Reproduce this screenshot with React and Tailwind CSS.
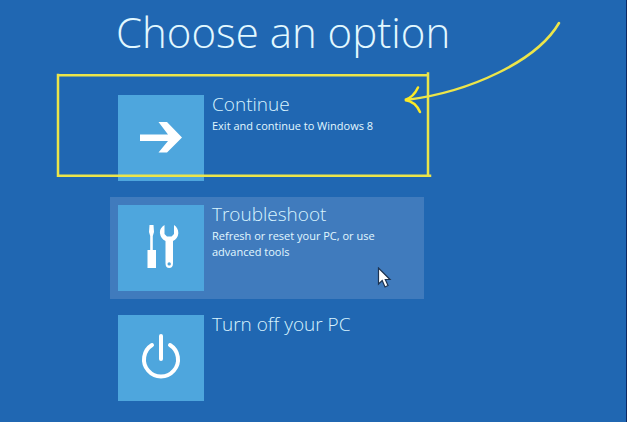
const ArrowIcon = () => (
  <svg viewBox="0 0 86 86" className="size-full" fill="#fff" aria-hidden="true">
    <path d="M22 39.5H50L40.500 27H49L64 42.500L49 57.500H40.500L50 46H22Z" />
  </svg>
)

const ToolsIcon = () => (
  <svg viewBox="0 0 86 86" className="size-full" fill="#fff" aria-hidden="true">
    <path d="M31.500 20H35.500L36 27L34.800 31V45H38V63H29.500V45H32.200V31L31 27Z" />
    <path
      fillRule="evenodd"
      d="M46.500 20C43 22 41.500 25 42 28.500C42.500 32 44.500 34.500 47.500 36V58.500C47.500 61.500 49 63 51.200 63C53.500 63 55 61.500 55 58.500V36C58 34.500 60 32 60.300 28.500C60.500 25 59 22 56 20V29L53.500 31.500H49L46.500 29ZM51.200 57.200A1.700 1.700 0 1 1 51.200 60.600A1.700 1.700 0 1 1 51.200 57.200Z"
    />
  </svg>
)

const PowerIcon = () => (
  <svg viewBox="0 0 86 86" className="size-full" fill="none" stroke="#fff" strokeWidth="4" strokeLinecap="round" aria-hidden="true">
    <path d="M43 21V44" />
    <path d="M34 30A17 17 0 1 0 52 30" />
  </svg>
)

const options = [
  { id: 'continue', title: 'Continue', description: 'Exit and continue to Windows 8', icon: ArrowIcon },
  { id: 'troubleshoot', title: 'Troubleshoot', description: 'Refresh or reset your PC, or use advanced tools', icon: ToolsIcon, active: true },
  { id: 'power', title: 'Turn off your PC', icon: PowerIcon },
]

const OptionButton = ({ option }) => {
  const Icon = option.icon

  return (
    <button
      type="button"
      className={`flex w-full items-start gap-2 p-2 text-left ${option.active ? 'bg-[#407bbd]' : ''}`}
    >
      <span className="size-[86px] shrink-0 bg-[#4ea6dd]">
        <Icon />
      </span>
      <span className="flex flex-col gap-1">
        <span className="text-[19px] leading-[19px] font-light text-[#d8f4ff]">{option.title}</span>
        {option.description && (
          <span className="max-w-44 text-[11px] leading-[16px] text-[#e2f8ff]">{option.description}</span>
        )}
      </span>
    </button>
  )
}

// Hand drawn highlight around the first option, with the arrow that points at it
const Annotation = () => (
  <svg
    width="627"
    height="422"
    viewBox="0 0 627 422"
    className="pointer-events-none absolute top-0 left-0"
    fill="none"
    stroke="#ece54a"
    strokeWidth="2.500"
    strokeLinecap="round"
    aria-hidden="true"
  >
    <path d="M58 75.300H428M428 73.500V175.500M430 175.800H58M58 75V175.500" strokeLinecap="square" />
    <path d="M559 23C537 61 470 92 406 100" />
    <path d="M418 87.500C415 94 411 98 405 100C412 101 417 105 420 112" stroke="#fbe926" />
  </svg>
)

const Cursor = () => (
  <svg width="16" height="22" viewBox="0 0 16 22" className="pointer-events-none absolute top-[267px] left-[377px]" aria-hidden="true">
    <path d="M1.500 1V17L5.200 13.500L8 20L11 18.500L8.300 12.500H13Z" fill="#fff" stroke="#1d3350" strokeWidth="1.200" />
  </svg>
)

export default function App() {
  return (
    <main className="relative min-h-screen overflow-hidden border-r border-[#0b2a66] bg-[#2067b2] font-['Open_Sans',sans-serif]">
      <h1 className="pt-2 pl-[116px] text-[42px] leading-[48px] font-light whitespace-nowrap text-[#e2f8ff]">
        Choose an option
      </h1>
      <div className="mt-[31px] ml-[110px] flex max-w-[314px] flex-col gap-2">
        {options.map((option) => (
          <OptionButton key={option.id} option={option} />
        ))}
      </div>
      <Annotation />
      <Cursor />
    </main>
  )
}
